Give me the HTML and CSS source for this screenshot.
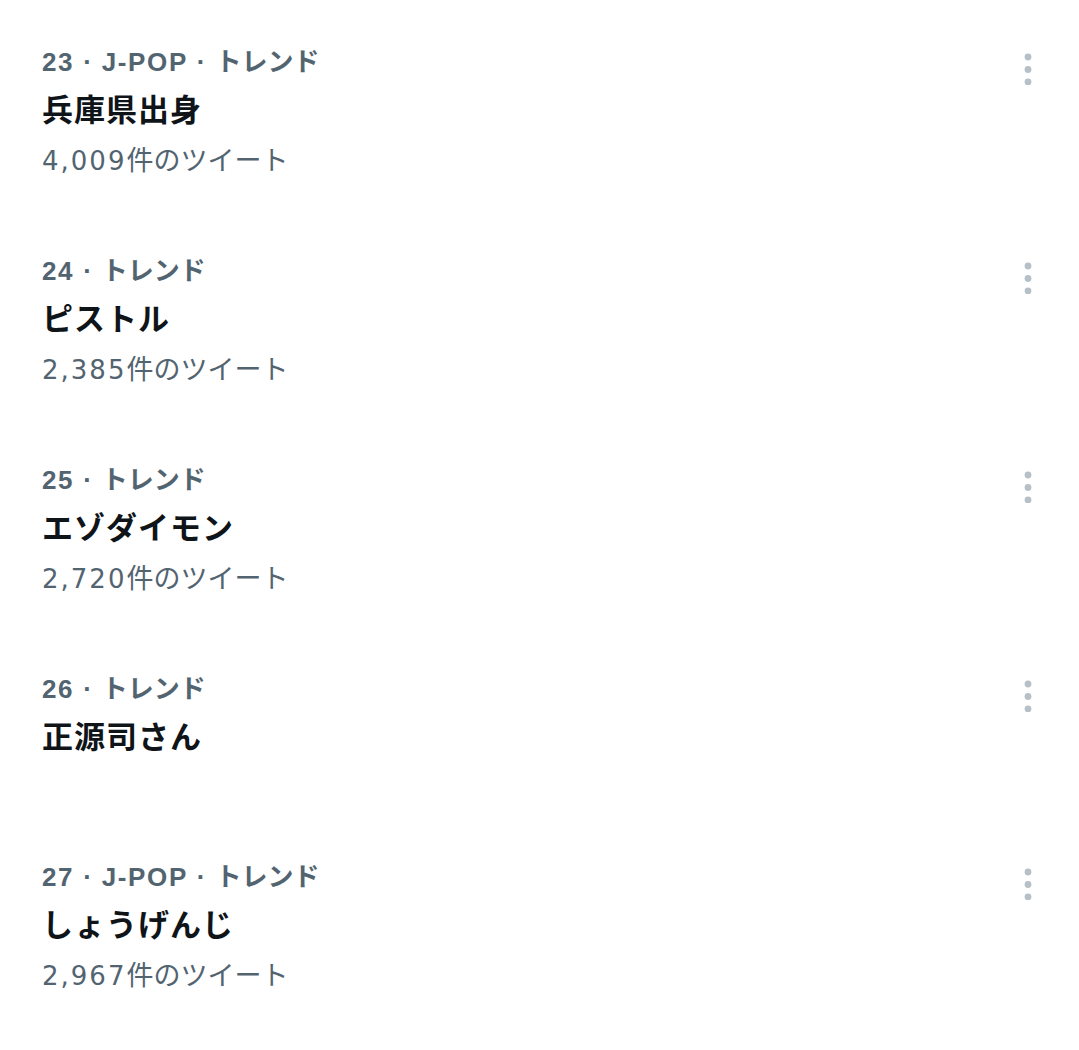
FILE: index.html
```html
<!DOCTYPE html>
<html lang="ja">
<head>
<meta charset="utf-8">
<title>トレンド</title>
<link rel="stylesheet" href="styles.css">
</head>
<body>
<ul class="trends">
  <li class="trend">
    <div class="trend-body">
      <div class="trend-meta"><span class="lat">23</span><span class="sep">·</span><span class="lat">J-POP</span><span class="sep">·</span>トレンド</div>
      <div class="trend-name">兵庫県出身</div>
      <div class="trend-count"><span class="num">4,009</span>件のツイート</div>
    </div>
    <button class="more" aria-label="その他"><svg viewBox="0 0 24 40" width="24" height="40"><circle cx="12" cy="12" r="3.4"/><circle cx="12" cy="24.5" r="3.4"/><circle cx="12" cy="37" r="3.4"/></svg></button>
  </li>
  <li class="trend">
    <div class="trend-body">
      <div class="trend-meta"><span class="lat">24</span><span class="sep">·</span>トレンド</div>
      <div class="trend-name">ピストル</div>
      <div class="trend-count"><span class="num">2,385</span>件のツイート</div>
    </div>
    <button class="more" aria-label="その他"><svg viewBox="0 0 24 40" width="24" height="40"><circle cx="12" cy="12" r="3.4"/><circle cx="12" cy="24.5" r="3.4"/><circle cx="12" cy="37" r="3.4"/></svg></button>
  </li>
  <li class="trend">
    <div class="trend-body">
      <div class="trend-meta"><span class="lat">25</span><span class="sep">·</span>トレンド</div>
      <div class="trend-name">エゾダイモン</div>
      <div class="trend-count"><span class="num">2,720</span>件のツイート</div>
    </div>
    <button class="more" aria-label="その他"><svg viewBox="0 0 24 40" width="24" height="40"><circle cx="12" cy="12" r="3.4"/><circle cx="12" cy="24.5" r="3.4"/><circle cx="12" cy="37" r="3.4"/></svg></button>
  </li>
  <li class="trend trend-nocount">
    <div class="trend-body">
      <div class="trend-meta"><span class="lat">26</span><span class="sep">·</span>トレンド</div>
      <div class="trend-name">正源司さん</div>
    </div>
    <button class="more" aria-label="その他"><svg viewBox="0 0 24 40" width="24" height="40"><circle cx="12" cy="12" r="3.4"/><circle cx="12" cy="24.5" r="3.4"/><circle cx="12" cy="37" r="3.4"/></svg></button>
  </li>
  <li class="trend">
    <div class="trend-body">
      <div class="trend-meta"><span class="lat">27</span><span class="sep">·</span><span class="lat">J-POP</span><span class="sep">·</span>トレンド</div>
      <div class="trend-name">しょうげんじ</div>
      <div class="trend-count"><span class="num">2,967</span>件のツイート</div>
    </div>
    <button class="more" aria-label="その他"><svg viewBox="0 0 24 40" width="24" height="40"><circle cx="12" cy="12" r="3.4"/><circle cx="12" cy="24.5" r="3.4"/><circle cx="12" cy="37" r="3.4"/></svg></button>
  </li>
</ul>
</body>
</html>
```
FILE: styles.css
```css
html, body {
  margin: 0;
  padding: 0;
  background: #ffffff;
}
body {
  font-family: "Liberation Sans", "Noto Sans CJK JP", sans-serif;
  color: #0f1419;
}
.trends {
  list-style: none;
  margin: 0;
  padding: 20px 0 0 0;
}
.trend {
  display: flex;
  align-items: flex-start;
  padding: 22px 39px 47px 42px;
}
.trend-nocount {
  padding-bottom: 68px;
}
.trend-body {
  flex: 1;
  min-width: 0;
}
.trend-meta {
  font-size: 26px;
  line-height: 40px;
  font-weight: 700;
  color: #536471;
}
.trend-meta .lat {
  letter-spacing: 1.6px;
}
.trend-meta .sep {
  display: inline-block;
  margin: 0 10px 0 9px;
}
.trend-name {
  font-family: "Noto Sans CJK JP", sans-serif;
  font-size: 31px;
  line-height: 52px;
  padding-bottom: 6px;
  font-weight: 700;
  letter-spacing: 1px;
  color: #0f1419;
}
.trend-count {
  font-size: 27px;
  line-height: 42px;
  color: #536471;
}
.trend-count .num {
  font-family: "DejaVu Sans", sans-serif;
  font-size: 26px;
  letter-spacing: 2px;
}
.more {
  margin: 3px 0 0 0;
  padding: 0;
  border: 0;
  background: none;
  display: flex;
}
.more svg {
  display: block;
  fill: #b6c0c8;
}
```
